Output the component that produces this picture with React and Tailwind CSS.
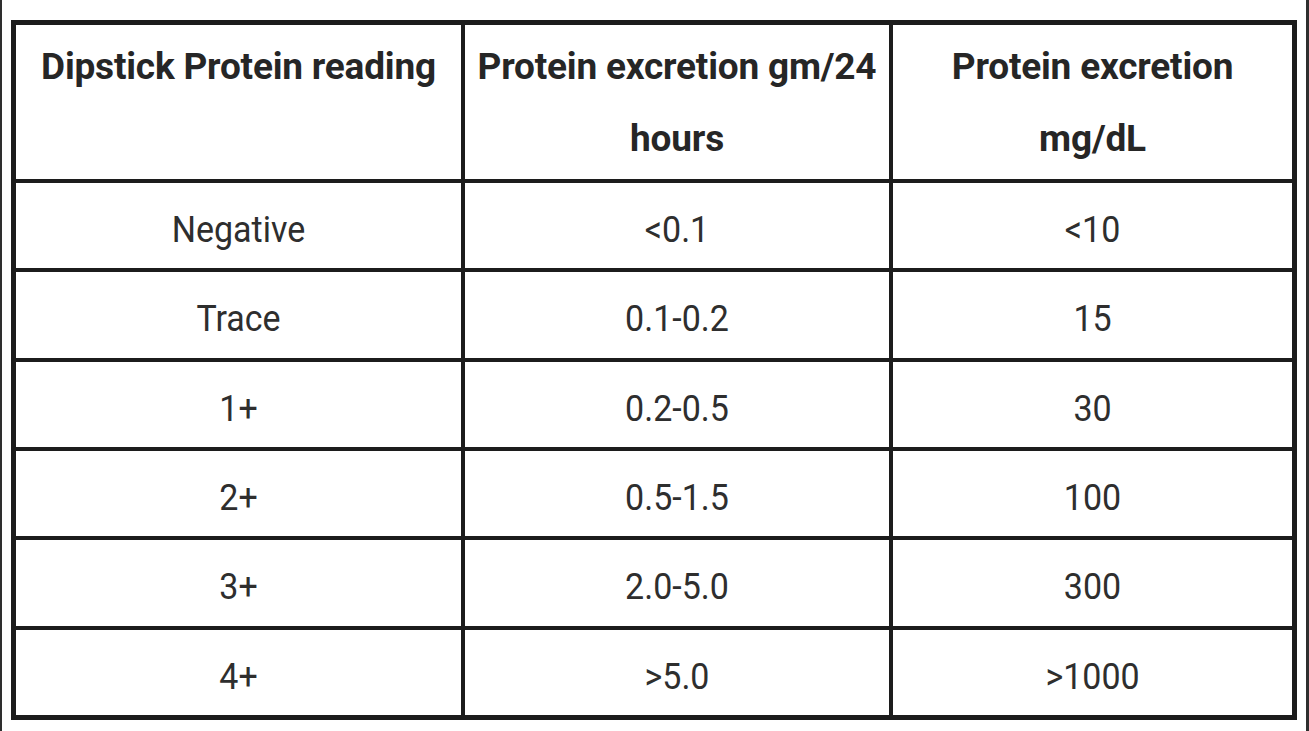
const HEADERS = [
  'Dipstick Protein reading',
  'Protein excretion gm/24 hours',
  'Protein excretion mg/dL',
];

const ROWS = [
  ['Negative', '<0.1', '<10'],
  ['Trace', '0.1-0.2', '15'],
  ['1+', '0.2-0.5', '30'],
  ['2+', '0.5-1.5', '100'],
  ['3+', '2.0-5.0', '300'],
  ['4+', '>5.0', '>1000'],
];

export default function App() {
  return (
    <div className="flex h-[731px] w-[1309px] bg-white font-['Roboto','Liberation_Sans',sans-serif]">
      <div className="w-[2px] bg-[#2e2e2e]" />
      <div className="flex-1 pl-[9px] pt-[20px]">
        <div className="grid w-[1286px] grid-cols-[445px_424px_399px] grid-rows-[154px_repeat(6,85.33px)] gap-[4px] border-[5px] border-[#1c1c1c] bg-[#1c1c1c]">
          {HEADERS.map((h, i) => (
            <div
              key={h}
              className={`bg-white pt-[6px] text-center text-[37px] font-bold leading-[72px] tracking-[-0.2px] text-[#262626] ${
                i === 2 ? 'px-[50px]' : 'px-1'
              }`}
            >
              {h}
            </div>
          ))}
          {ROWS.map((row) =>
            row.map((cell, j) => (
              <div
                key={row[0] + j}
                className="flex items-center justify-center bg-white pt-[8px] text-[34px] text-[#2e2e2e]"
              >
                <span className="inline-block scale-y-[1.06]">{cell}</span>
              </div>
            ))
          )}
        </div>
      </div>
      <div className="w-[3px] bg-[#2e2e2e]" />
    </div>
  );
}
